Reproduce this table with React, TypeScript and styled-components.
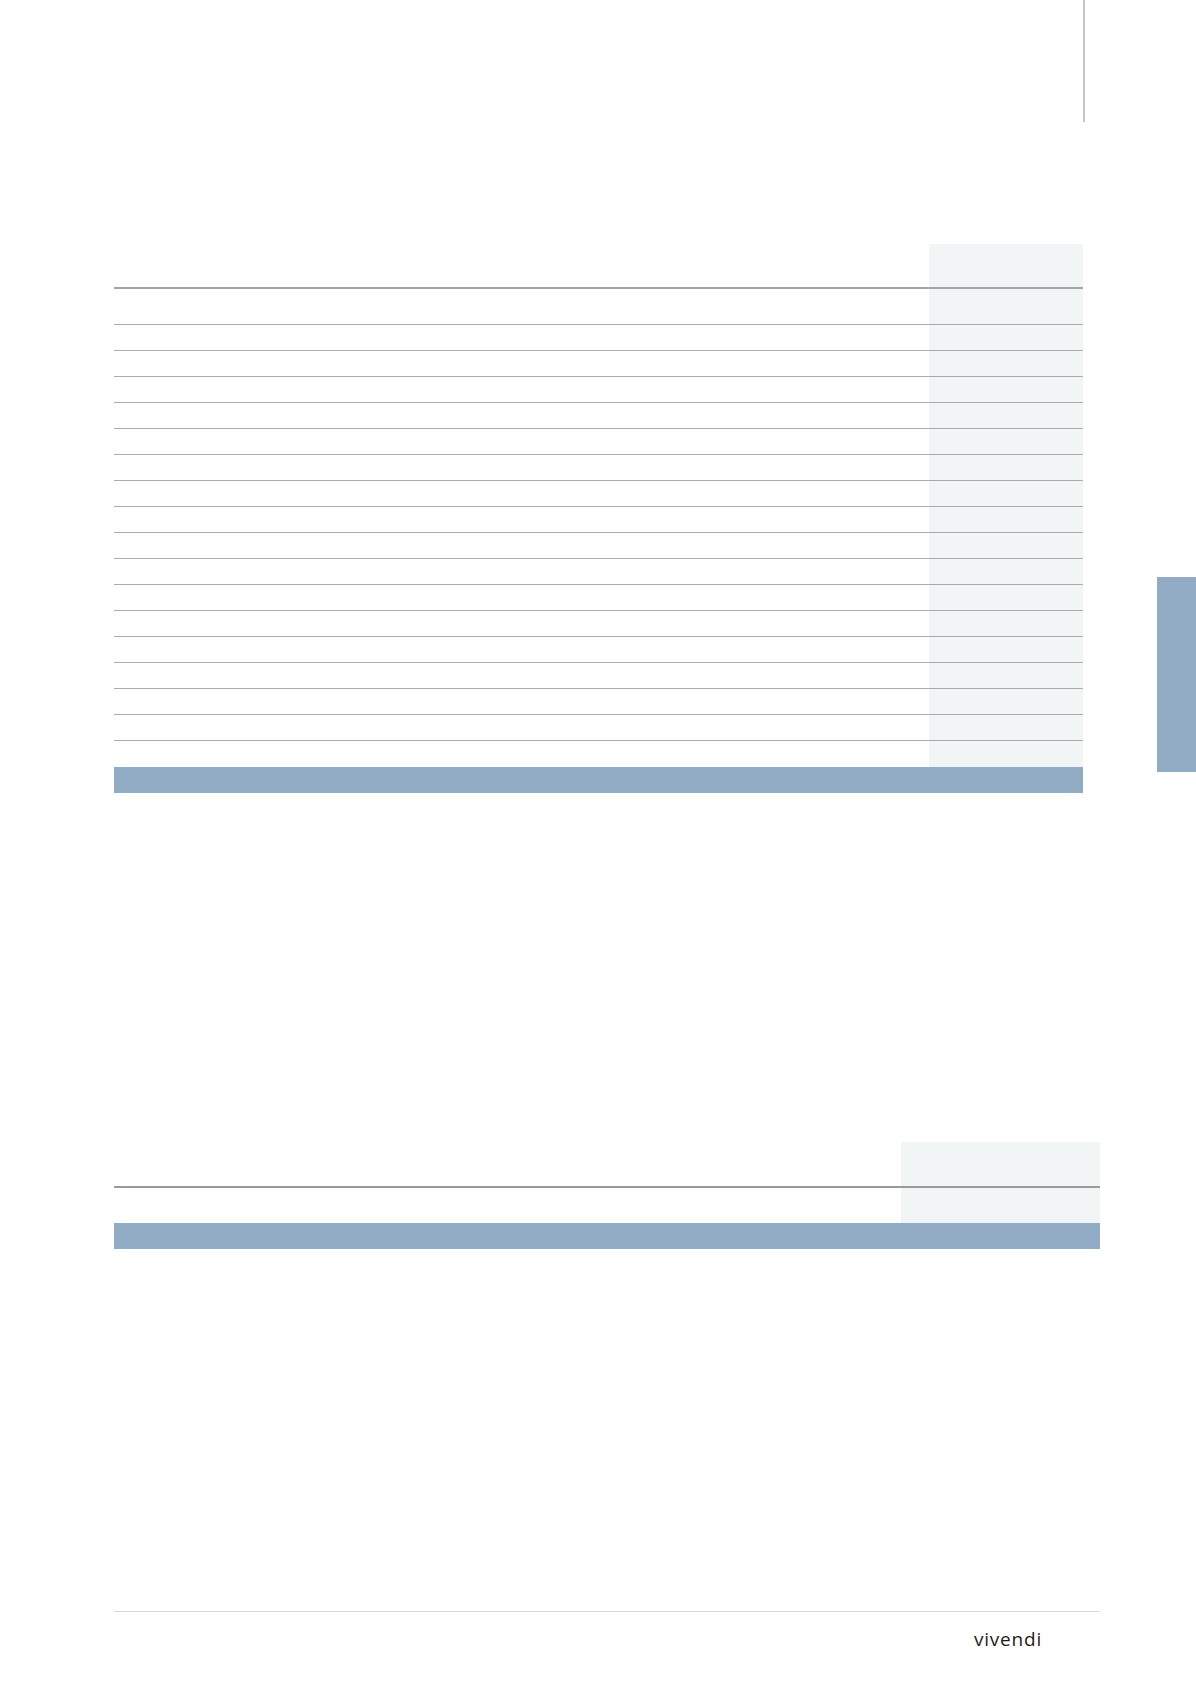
import React from "react";
import styled, { createGlobalStyle } from "styled-components";

const Global = createGlobalStyle`
  html, body { margin: 0; padding: 0; background: #ffffff; }
  body { font-family: "Open Sans", "Liberation Sans", Arial, sans-serif; }
  #root { width: 1196px; }
`;

const Page = styled.div`
  position: relative;
  width: 1196px;
  height: 1692px;
  background: #ffffff;
  overflow: hidden;
`;

const TopBar = styled.div`
  height: 122px;
  display: flex;
  padding-left: 1083px;
`;

const TopRule = styled.div`
  width: 2px;
  height: 100%;
  background: #c5c7c7;
`;

const SideTab = styled.div`
  position: absolute;
  left: 1157px;
  top: 577px;
  width: 39px;
  height: 195px;
  background: #91abc5;
`;

const Table = styled.div<{ $top: number; $width: number; $col: number }>`
  margin-top: ${(p) => p.$top}px;
  margin-left: 114px;
  width: ${(p) => p.$width}px;
  display: grid;
  grid-template-columns: 1fr ${(p) => p.$col}px;
`;

const Row = styled.div<{ $h: number; $line?: "none" | "thin" | "thick" | "dark" }>`
  grid-column: 1 / -1;
  display: grid;
  grid-template-columns: subgrid;
  height: ${(p) => p.$h}px;
  box-sizing: border-box;
  border-bottom: ${(p) =>
    p.$line === "thick"
      ? "2px solid #a2a5a5"
      : p.$line === "dark"
      ? "2px solid #979b99"
      : p.$line === "thin"
      ? "1px solid #aaacac"
      : "none"};
`;

const Cell = styled.div<{ $shade?: boolean }>`
  background: ${(p) => (p.$shade ? "#f2f5f6" : "transparent")};
`;

const TotalRow = styled.div`
  grid-column: 1 / -1;
  height: 26px;
  background: #91abc5;
`;

const Footer = styled.div<{ $top: number }>`
  margin-top: ${(p) => p.$top}px;
  margin-left: 114px;
  width: 986px;
  border-top: 1px solid #d9d9d9;
  display: flex;
  justify-content: flex-end;
  padding-right: 58px;
  box-sizing: border-box;
`;

const Logo = styled.div`
  margin-top: 17px;
  font-family: "Open Sans", "Liberation Sans", Arial, sans-serif;
  font-size: 19px;
  line-height: 20px;
  font-weight: 500;
  letter-spacing: 0.8px;
  color: #1f1b18;
`;

export default function App() {
  const bodyRows = Array.from({ length: 16 });
  return (
    <>
      <Global />
      <Page>
        <TopBar>
          <TopRule />
        </TopBar>
        <SideTab />

        <Table $top={122} $width={969} $col={154}>
          <Row $h={45} $line="thick">
            <Cell />
            <Cell $shade />
          </Row>
          <Row $h={36} $line="thin">
            <Cell />
            <Cell $shade />
          </Row>
          {bodyRows.map((_, i) => (
            <Row key={i} $h={26} $line="thin">
              <Cell />
              <Cell $shade />
            </Row>
          ))}
          <Row $h={26} $line="none">
            <Cell />
            <Cell $shade />
          </Row>
          <TotalRow />
        </Table>

        <Table $top={349} $width={986} $col={199}>
          <Row $h={46} $line="dark">
            <Cell />
            <Cell $shade />
          </Row>
          <Row $h={35} $line="none">
            <Cell />
            <Cell $shade />
          </Row>
          <TotalRow />
        </Table>

        <Footer $top={362}>
          <Logo>vivendi</Logo>
        </Footer>
      </Page>
    </>
  );
}
